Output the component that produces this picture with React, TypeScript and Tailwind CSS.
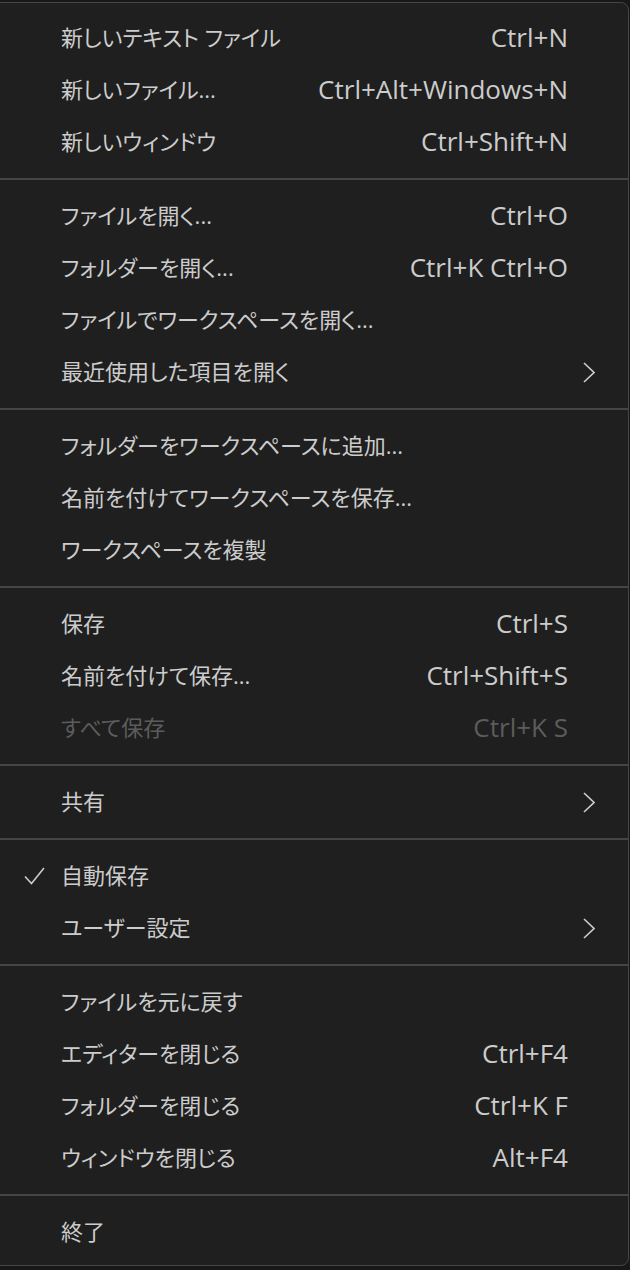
import React from 'react';

type Item =
  | { kind: 'sep' }
  | {
      kind: 'item';
      label: string;
      shortcut?: string;
      submenu?: boolean;
      checked?: boolean;
      disabled?: boolean;
    };

const items: Item[] = [
  { kind: 'item', label: '新しいテキスト ファイル', shortcut: 'Ctrl+N' },
  { kind: 'item', label: '新しいファイル...', shortcut: 'Ctrl+Alt+Windows+N' },
  { kind: 'item', label: '新しいウィンドウ', shortcut: 'Ctrl+Shift+N' },
  { kind: 'sep' },
  { kind: 'item', label: 'ファイルを開く...', shortcut: 'Ctrl+O' },
  { kind: 'item', label: 'フォルダーを開く...', shortcut: 'Ctrl+K Ctrl+O' },
  { kind: 'item', label: 'ファイルでワークスペースを開く...' },
  { kind: 'item', label: '最近使用した項目を開く', submenu: true },
  { kind: 'sep' },
  { kind: 'item', label: 'フォルダーをワークスペースに追加...' },
  { kind: 'item', label: '名前を付けてワークスペースを保存...' },
  { kind: 'item', label: 'ワークスペースを複製' },
  { kind: 'sep' },
  { kind: 'item', label: '保存', shortcut: 'Ctrl+S' },
  { kind: 'item', label: '名前を付けて保存...', shortcut: 'Ctrl+Shift+S' },
  { kind: 'item', label: 'すべて保存', shortcut: 'Ctrl+K S', disabled: true },
  { kind: 'sep' },
  { kind: 'item', label: '共有', submenu: true },
  { kind: 'sep' },
  { kind: 'item', label: '自動保存', checked: true },
  { kind: 'item', label: 'ユーザー設定', submenu: true },
  { kind: 'sep' },
  { kind: 'item', label: 'ファイルを元に戻す' },
  { kind: 'item', label: 'エディターを閉じる', shortcut: 'Ctrl+F4' },
  { kind: 'item', label: 'フォルダーを閉じる', shortcut: 'Ctrl+K F' },
  { kind: 'item', label: 'ウィンドウを閉じる', shortcut: 'Alt+F4' },
  { kind: 'sep' },
  { kind: 'item', label: '終了' },
];

function Chevron() {
  return (
    <svg width="12" height="21" viewBox="0 0 12 21" fill="none">
      <path d="M1 1 L11 10.5 L1 20" stroke="currentColor" strokeWidth="1.6" strokeLinejoin="miter" />
    </svg>
  );
}

function Check() {
  return (
    <svg width="21" height="18" viewBox="0 0 21 18" fill="none">
      <path d="M1 9.5 L7.5 16.5 L20 1" stroke="currentColor" strokeWidth="1.6" />
    </svg>
  );
}

export default function App() {
  return (
    <div className="w-[630px] h-[1270px] bg-[#181818] overflow-hidden font-['Open_Sans','Noto_Sans_CJK_JP',sans-serif] [font-feature-settings:'palt']">
      {/* menu panel, left edge runs off screen */}
      <div className="ml-[-12px] mt-[2px] w-[641px] rounded-[8px] border border-[#454545] bg-[#1f1f1f] pt-[9px] pb-[7px] text-[22px] text-[#cccccc]">
        {items.map((it, i) =>
          it.kind === 'sep' ? (
            <div key={i} className="h-[22px] pt-[10px]">
              <div className="h-[2px] w-full bg-[#454545]" />
            </div>
          ) : (
            <div
              key={i}
              className={`h-[52px] flex items-center pb-[3px] ${it.disabled ? 'text-[#5c5c5c]' : ''}`}
            >
              <div className="w-[72px] shrink-0 flex items-center justify-start pl-[35px] pt-[3px]">
                {it.checked && <Check />}
              </div>
              <div className="flex-1 whitespace-nowrap leading-none">{it.label}</div>
              {it.shortcut && (
                <div className="whitespace-nowrap leading-none text-[26px]">{it.shortcut}</div>
              )}
              <div className="w-[60px] shrink-0 flex items-center pl-[15px] pt-[3px]">
                {it.submenu && <Chevron />}
              </div>
            </div>
          )
        )}
      </div>
    </div>
  );
}
